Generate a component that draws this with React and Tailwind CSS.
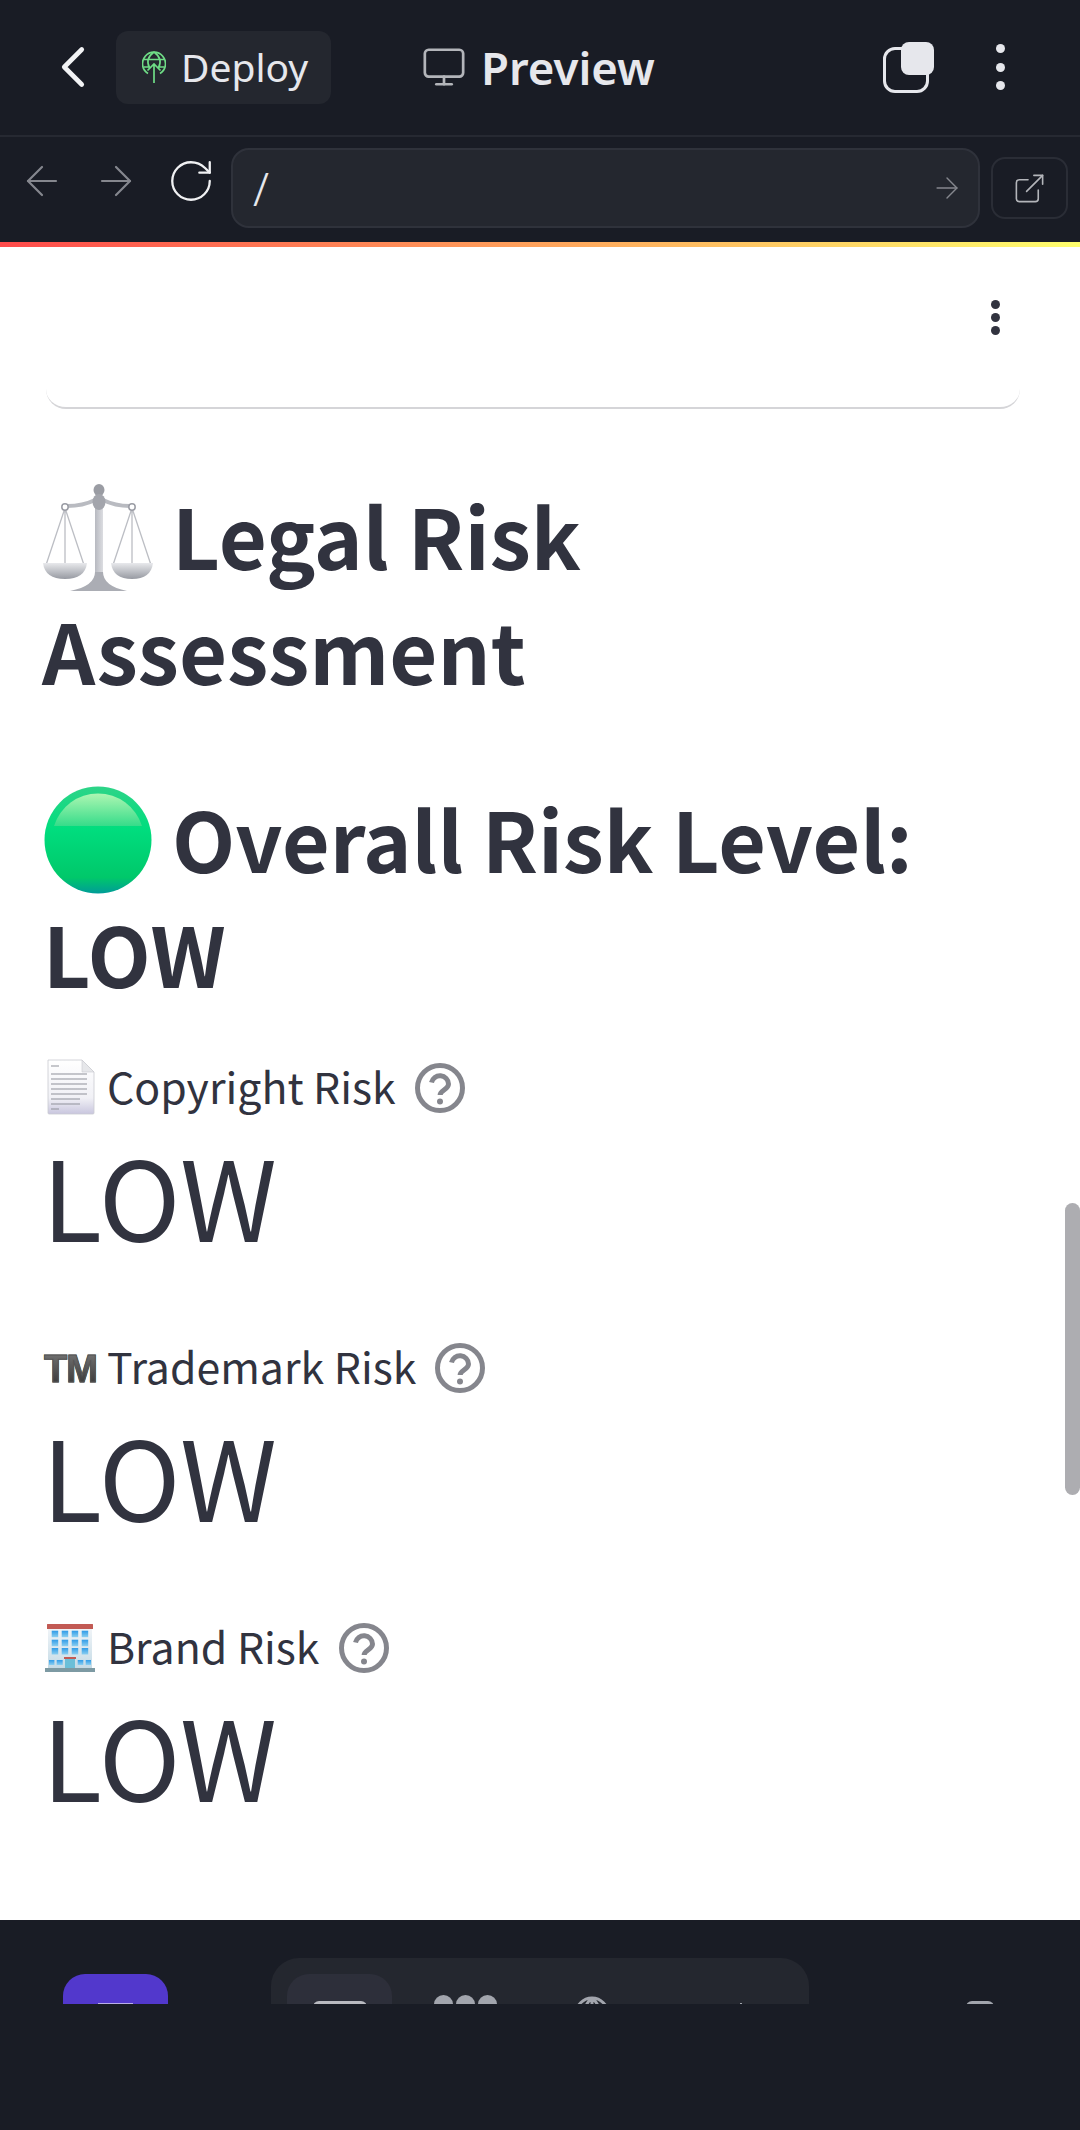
import { ChevronLeft, Monitor, ArrowLeft, ArrowRight, RotateCw, ExternalLink } from "lucide-react";

const Scales = () => (
  <svg viewBox="0 0 110 108" className="w-[110px] h-[108px] shrink-0">
    <defs>
      <linearGradient id="steel" x1="0" y1="0" x2="0" y2="1">
        <stop offset="0" stopColor="#e8e9ec" />
        <stop offset="1" stopColor="#979aa2" />
      </linearGradient>
      <linearGradient id="pole" x1="0" y1="0" x2="1" y2="0">
        <stop offset="0" stopColor="#b7b9c0" />
        <stop offset="1" stopColor="#dcdde1" />
      </linearGradient>
    </defs>
    <path d="M22 24L3 81M22 24L41 81M22 24V81M89 24L70 81M89 24L108 81M89 24V81" stroke="#bcbec4" strokeWidth="1.3" fill="none" />
    <path d="M24 22Q40 22 52 16M60 16Q72 22 87 22" stroke="#b9bbc1" strokeWidth="4" fill="none" />
    <circle cx="22" cy="23" r="3.2" fill="#fff" stroke="#9a9ca4" strokeWidth="1.5" />
    <circle cx="89" cy="23" r="3.2" fill="#fff" stroke="#9a9ca4" strokeWidth="1.5" />
    <rect x="52" y="20" width="8" height="76" fill="url(#pole)" />
    <ellipse cx="56" cy="6" rx="5.5" ry="6" fill="#9a9ca3" />
    <ellipse cx="56" cy="18" rx="6.5" ry="8" fill="#a3a5ac" />
    <path d="M0 79H44Q42 95 22 95Q2 95 0 79Z" fill="url(#steel)" />
    <path d="M68 79H110Q108 95 89 95Q70 95 68 79Z" fill="url(#steel)" />
    <path d="M52 88Q52 102 27 107H84Q60 102 60 88Z" fill="#abadb4" />
  </svg>
);

const GreenDot = () => (
  <svg viewBox="0 0 108 108" className="w-[108px] h-[108px] shrink-0">
    <defs>
      <linearGradient id="dot" x1="0" y1="0" x2="0" y2="1">
        <stop offset="0" stopColor="#2ed488" />
        <stop offset="0.4" stopColor="#00dd7e" />
        <stop offset="0.85" stopColor="#00c86a" />
        <stop offset="1" stopColor="#009c98" />
      </linearGradient>
      <linearGradient id="shine" x1="0" y1="0" x2="0" y2="1">
        <stop offset="0" stopColor="#aef6b2" />
        <stop offset="1" stopColor="#36dc8a" />
      </linearGradient>
    </defs>
    <circle cx="54" cy="54" r="53.5" fill="url(#dot)" />
    <path d="M10 40A46 46 0 0 1 98 40Z" fill="url(#shine)" />
  </svg>
);

const DocEmoji = () => (
  <svg viewBox="0 0 48 56" className="w-[48px] h-[56px] shrink-0">
    <defs>
      <linearGradient id="paper" x1="0" y1="0" x2="0" y2="1">
        <stop offset="0" stopColor="#ffffff" />
        <stop offset="0.7" stopColor="#f1f1f6" />
        <stop offset="1" stopColor="#c9c6de" />
      </linearGradient>
    </defs>
    <path d="M1 1H35L47 13V54a1 1 0 0 1-1 1H2a1 1 0 0 1-1-1Z" fill="url(#paper)" stroke="#c9cad0" strokeWidth="0.8" />
    <path d="M35 1V13H47Z" fill="#e6e7ea" stroke="#c9cad0" strokeWidth="0.6" />
    <path d="M4 7H12M4 15H40M4 20H40M4 25H40M4 30H40M4 35H40M4 40H33M4 45H33M4 50H12" stroke="#8f919a" strokeWidth="1" />
  </svg>
);

const BuildingEmoji = () => (
  <svg viewBox="0 0 50 49" className="w-[50px] h-[49px] shrink-0">
    <defs>
      <linearGradient id="wall" x1="0" y1="0" x2="0" y2="1">
        <stop offset="0" stopColor="#f2f5f8" />
        <stop offset="1" stopColor="#c5dbe6" />
      </linearGradient>
      <linearGradient id="pane" x1="0" y1="0" x2="0" y2="1">
        <stop offset="0" stopColor="#2f9be8" />
        <stop offset="1" stopColor="#8ccff0" />
      </linearGradient>
    </defs>
    <rect x="3" y="4" width="44" height="41" fill="url(#wall)" />
    <rect x="2" y="1" width="46" height="5" rx="0.5" fill="#c25a54" />
    {[7.7, 16.7, 25].map((y) =>
      [6.7, 16.7, 26.7, 36.7].map((x) => <rect key={`${x}-${y}`} x={x} y={y} width="6.5" height="6.5" fill="url(#pane)" />)
    )}
    <rect x="4" y="37" width="5.4" height="5" fill="url(#pane)" />
    <rect x="11.7" y="37" width="6" height="5" fill="url(#pane)" />
    <rect x="32.7" y="37" width="5.6" height="5" fill="url(#pane)" />
    <rect x="40.7" y="37" width="5.3" height="5" fill="url(#pane)" />
    <rect x="20" y="36" width="10" height="9" fill="#6bbfd8" />
    <rect x="19" y="34" width="12" height="2" fill="#c25a54" />
    <rect x="0" y="45" width="50" height="4" fill="#7d9aa3" />
  </svg>
);

const HelpIcon = () => (
  <svg viewBox="0 0 50 50" fill="none" className="w-[50px] h-[50px] shrink-0 mt-[2px]">
    <circle cx="25" cy="25" r="22.5" stroke="#85868d" strokeWidth="5" />
    <path d="M16.5 19.5a8.6 8.6 0 0 1 17 1.5c0 5.5-8.4 6.4-8.4 11" stroke="#85868d" strokeWidth="5" />
    <circle cx="25" cy="38.5" r="3" fill="#85868d" />
  </svg>
);

const DeployIcon = () => (
  <svg viewBox="0 0 24 32" fill="none" stroke="#6fdc86" strokeWidth="1.7" className="w-[24px] h-[32px]">
    <path d="M6 22.5A11.5 11.5 0 1 1 18 22.5" />
    <path d="M12 1C5 6 5 12 7.5 17M12 1C19 6 19 12 16.5 17M1 8.5H23M2 16H8M16 16H22" />
    <path d="M12 32V13M5.5 19.5L12 13L18.5 19.5" />
  </svg>
);

const Metric = ({ icon, label }) => (
  <div className="flex flex-col">
    <div className="flex items-center h-[52px]">
      <div className="w-[65px] shrink-0 flex items-center">{icon}</div>
      <span className="text-[42.8px] leading-[52px] pb-[5px] mr-[19px] whitespace-nowrap">{label}</span>
      <HelpIcon />
    </div>
    <div className="text-[110.4px] leading-[130px] mt-[16px]">LOW</div>
  </div>
);

export default function App() {
  return (
    <div className="w-[1080px] h-[2130px] overflow-hidden flex flex-col bg-white font-['Noto_Sans_CJK_JP',sans-serif] text-[#31333f]">
      <header className="bg-[#191c25] shrink-0 font-['Noto_Sans',sans-serif] text-[#e6e7ec]">
        <div className="h-[137px] pb-[1px] flex items-center border-b-2 border-[#262932]">
          <ChevronLeft size={70} strokeWidth={1.6} className="ml-[38px] text-[#f2f3f5]" />
          <div className="ml-[8px] w-[215px] h-[73px] rounded-[12px] bg-[#24272f] flex items-center pl-[26px] gap-[15px]">
            <DeployIcon />
            <span className="text-[39px]">Deploy</span>
          </div>
          <Monitor size={46} strokeWidth={1.4} className="ml-[90px] text-[#b3b5ba]" />
          <span className="ml-[14px] text-[45.5px] font-semibold">Preview</span>
          <div className="ml-auto relative w-[51px] h-[51px]">
            <div className="absolute left-0 bottom-0 w-[46px] h-[46px] rounded-[12px] border-[3px] border-[#e6e7ec]" />
            <div className="absolute right-0 top-0 w-[33px] h-[33px] rounded-[8px] bg-[#e6e7ec]" />
          </div>
          <div className="ml-[62px] mr-[75px] flex flex-col gap-[9.5px]">
            <span className="w-[9px] h-[9px] rounded-full bg-[#e6e7ec]" />
            <span className="w-[9px] h-[9px] rounded-full bg-[#e6e7ec]" />
            <span className="w-[9px] h-[9px] rounded-full bg-[#e6e7ec]" />
          </div>
        </div>
        <div className="h-[105px] pb-[3px] flex items-center">
          <ArrowLeft size={48} strokeWidth={1.1} className="ml-[18px] mb-[14px] text-[#85878e]" />
          <ArrowRight size={48} strokeWidth={1.1} className="ml-[26px] mb-[14px] text-[#85878e]" />
          <RotateCw size={50} strokeWidth={1.1} className="ml-[26px] mb-[14px] text-[#f0f1f3]" />
          <div className="ml-[15px] w-[749px] h-[80px] rounded-[18px] bg-[#24272f] border-2 border-[#2f323b] flex items-center pl-[20px] pr-[14px]">
            <span className="text-[46px] font-light flex-1">/</span>
            <ArrowRight size={34} strokeWidth={1} className="text-[#85878e]" />
          </div>
          <div className="ml-[11px] w-[77px] h-[62px] rounded-[14px] border-2 border-[#2a2d36] flex items-center justify-center">
            <ExternalLink size={35} strokeWidth={1.1} className="text-[#b3b5ba]" />
          </div>
        </div>
      </header>
      <div className="h-[5px] shrink-0 bg-[linear-gradient(90deg,#ff4b4b,#ffa35c_50%,#ffff6e)]" />

      <main className="flex-1 relative overflow-hidden px-[42px]">
        <div className="absolute right-[80px] top-[53px] flex flex-col gap-[4px]">
          <span className="w-[9px] h-[9px] rounded-full bg-[#31333f]" />
          <span className="w-[9px] h-[9px] rounded-full bg-[#31333f]" />
          <span className="w-[9px] h-[9px] rounded-full bg-[#31333f]" />
        </div>
        <div className="h-[162px] ml-[4px] mr-[18px] border-b-2 border-[#d5d5d8] rounded-b-[20px]" />

        <h1 className="mt-[68px] text-[83px] leading-[115px] font-semibold flex flex-col">
          <span className="flex items-center gap-[19px]">
            <span className="ml-[1px] translate-y-[3px]"><Scales /></span>
            Legal Risk
          </span>
          <span>Assessment</span>
        </h1>

        <h2 className="mt-[73px] text-[82.2px] leading-[115px] font-semibold flex flex-col">
          <span className="flex items-center gap-[20px] whitespace-nowrap">
            <span className="ml-[2px] translate-y-[2px]"><GreenDot /></span>
            Overall Risk Level:
          </span>
          <span className="ml-[1px]">LOW</span>
        </h2>

        <div className="mt-[51px] flex flex-col gap-[82px]">
          <Metric icon={<span className="ml-[5px]"><DocEmoji /></span>} label="Copyright Risk" />
          <Metric
            icon={
              <span className="ml-[2px] mt-[3px] text-[38px] font-bold leading-none tracking-[-1px] bg-[linear-gradient(180deg,#777,#333)] bg-clip-text text-transparent [-webkit-text-stroke:1px_#555] font-['Liberation_Sans',sans-serif]">
                TM
              </span>
            }
            label="Trademark Risk"
          />
          <Metric icon={<span className="ml-[3px]"><BuildingEmoji /></span>} label="Brand Risk" />
        </div>

        <div className="absolute right-0 top-[956px] w-[15px] h-[292px] rounded-full bg-[#adadb1]" />
      </main>

      <footer className="h-[210px] shrink-0 bg-[#191c25] pt-[38px]">
        <div className="h-[46px] relative overflow-hidden">
          <div className="absolute left-[63px] top-[16px] w-[105px] h-[80px] rounded-[22px] bg-[#5238cc]">
            <div className="mx-auto mt-[29px] w-[35px] h-[4px] bg-[#b9aee8]" />
          </div>
          <div className="absolute left-[271px] top-0 w-[538px] h-[90px] rounded-[28px] bg-[#24272f]">
            <div className="absolute left-[16px] top-[16px] w-[105px] h-[80px] rounded-[22px] bg-[#2d2f3a]">
              <div className="mx-auto mt-[27px] w-[54px] h-[20px] rounded-[6px] bg-[#b9bac0]" />
            </div>
            <div className="absolute left-[163px] top-[37px] flex gap-[3px]">
              <span className="w-[19px] h-[36px] rounded-full bg-[#a2a5ad]" />
              <span className="w-[19px] h-[36px] rounded-full bg-[#a2a5ad]" />
              <span className="w-[19px] h-[36px] rounded-full bg-[#a2a5ad]" />
            </div>
            <svg viewBox="0 0 36 36" fill="none" stroke="#a2a5ad" strokeWidth="3" className="absolute left-[303px] top-[38px] w-[36px] h-[36px]">
              <circle cx="18" cy="18" r="16" />
              <path d="M18 2V34M18 2C8 10 8 26 18 34M18 2C28 10 28 26 18 34" />
            </svg>
            <div className="absolute left-[469px] top-[45px] w-[2px] h-[1px] bg-[#a2a5ad]" />
          </div>
          <div className="absolute left-[966px] top-[43px] w-[28px] h-[20px] rounded-[6px] bg-[#a2a5ad]" />
        </div>
      </footer>
    </div>
  );
}
